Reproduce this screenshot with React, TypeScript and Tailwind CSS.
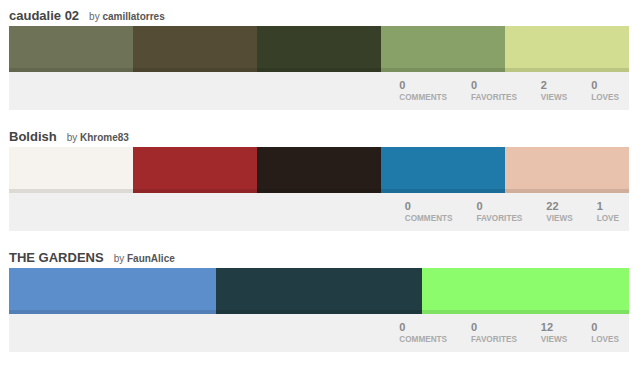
type Stat = { value: number; label: string };

type Palette = {
  title: string;
  author: string;
  colors: string[];
  stats: Stat[];
};

const palettes: Palette[] = [
  {
    title: "caudalie 02",
    author: "camillatorres",
    colors: ["#6e7357", "#544c35", "#373f29", "#87a169", "#d2dd92"],
    stats: [
      { value: 0, label: "Comments" },
      { value: 0, label: "Favorites" },
      { value: 2, label: "Views" },
      { value: 0, label: "Loves" },
    ],
  },
  {
    title: "Boldish",
    author: "Khrome83",
    colors: ["#f6f3ef", "#a1292b", "#261d18", "#1f79a9", "#e8c2ad"],
    stats: [
      { value: 0, label: "Comments" },
      { value: 0, label: "Favorites" },
      { value: 22, label: "Views" },
      { value: 1, label: "Love" },
    ],
  },
  {
    title: "THE GARDENS",
    author: "FaunAlice",
    colors: ["#5b8ecb", "#213d43", "#8cfc6d"],
    stats: [
      { value: 0, label: "Comments" },
      { value: 0, label: "Favorites" },
      { value: 12, label: "Views" },
      { value: 0, label: "Loves" },
    ],
  },
];

function PaletteCard({ palette }: { palette: Palette }) {
  return (
    <div className="mb-[11px]">
      <div className="flex h-[26px] items-baseline gap-[10px] pt-[8px]">
        <h2 className="text-[13px] leading-[16px] font-bold text-[#444]">{palette.title}</h2>
        <span className="text-[10px] text-[#666]">
          by <span className="font-bold text-[#555]">{palette.author}</span>
        </span>
      </div>
      <div className="flex h-[46px]">
        {palette.colors.map((color) => (
          <div key={color} className="flex flex-1 flex-col justify-end" style={{ backgroundColor: color }}>
            <div className="h-[4px] bg-black/10" />
          </div>
        ))}
      </div>
      <div className="flex h-[38px] justify-end gap-[24px] bg-[#f0f0f0] pr-[10px] pt-[7px]">
        {palette.stats.map((stat) => (
          <div key={stat.label} className="flex flex-col">
            <span className="text-[11px] leading-[12px] font-bold text-[#888]">{stat.value}</span>
            <span className="mt-[2px] text-[8.2px] leading-[10px] font-bold uppercase text-[#aaa]">{stat.label}</span>
          </div>
        ))}
      </div>
    </div>
  );
}

export default function App() {
  return (
    <div className="h-[366px] w-[640px] overflow-hidden bg-white pl-[9px] pr-[11px]" style={{ fontFamily: '"Liberation Sans", Arial, sans-serif' }}>
      {palettes.map((palette) => (
        <PaletteCard key={palette.title} palette={palette} />
      ))}
    </div>
  );
}
